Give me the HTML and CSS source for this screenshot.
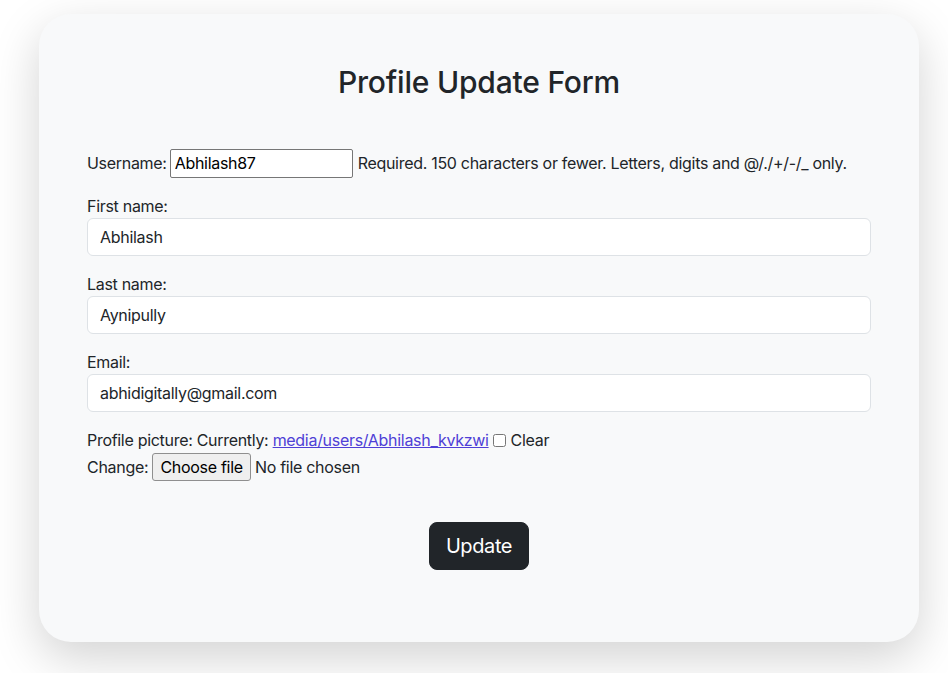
FILE: index.html
```html
<!DOCTYPE html>
<html lang="en">
<head>
<meta charset="utf-8">
<title>Profile Update</title>
<link rel="stylesheet" href="styles.css">
</head>
<body>
<div class="page">
<div class="card">
  <h2 class="title">Profile Update Form</h2>
  <form class="form">
    <p class="row-inline">
      <label for="u">Username:</label>
      <input id="u" class="plain-input" type="text" value="Abhilash87">
      <span class="help">Required. 150 characters or fewer. Letters, digits and @/./+/-/_ only.</span>
    </p>
    <div class="field">
      <label for="f">First name:</label>
      <input id="f" class="control" type="text" value="Abhilash">
    </div>
    <div class="field">
      <label for="l">Last name:</label>
      <input id="l" class="control" type="text" value="Aynipully">
    </div>
    <div class="field">
      <label for="e">Email:</label>
      <input id="e" class="control" type="email" value="abhidigitally@gmail.com">
    </div>
    <div class="pic">
      <div class="pic-line">Profile picture: Currently: <a class="link" href="#">media/users/Abhilash_kvkzwi</a><input type="checkbox" class="check" id="c"><label for="c">Clear</label></div>
      <div class="pic-line">Change: <span class="file-btn">Choose file</span> No file chosen</div>
    </div>
    <div class="actions">
      <button type="button" class="btn">Update</button>
    </div>
  </form>
</div>
</div>
</body>
</html>
```
FILE: styles.css
```css
* { box-sizing: border-box; }
html, body { margin: 0; padding: 0; background: #fff; }
body {
  font-family: Inter, "Noto Sans", "Liberation Sans", sans-serif;
  font-size: 16px;
  line-height: 1.5;
  color: #212529;
  letter-spacing: -0.3px;
}
.page {
  min-height: 673px;
  padding: 14px 0 31px 39px;
}
.card {
  width: 880px;
  height: 628px;
  background: #f8f9fa;
  border-radius: 32px;
  box-shadow: 0 16px 48px rgba(0,0,0,0.175);
  padding: 50px 48px 48px;
}
.title {
  margin: 0;
  text-align: center;
  font-size: 30px;
  font-weight: 500;
  line-height: 1.2;
  letter-spacing: -0.2px;
}
.form { margin-top: 48px; }
.row-inline {
  margin: 0 0 16px;
  height: 30px;
  display: flex;
  align-items: center;
  white-space: nowrap;
}
.plain-input {
  width: 183px;
  height: 29px;
  margin: 0 5px 0 3px;
  border: 1px solid #767676;
  border-radius: 2px;
  padding: 1px 4px;
  font: inherit;
  letter-spacing: inherit;
  color: #000;
  background: #fff;
}
.field { margin-bottom: 16px; }
.field label { display: block; }
.control {
  display: block;
  width: 100%;
  height: 38px;
  padding: 6px 12px;
  font: inherit;
  letter-spacing: inherit;
  color: #212529;
  background: #fff;
  border: 1px solid #dee2e6;
  border-radius: 6px;
}
.pic { margin-top: -1px; }
.pic-line { line-height: 26px; display: flex; align-items: center; white-space: pre; }
.link { color: #4f3fd6; text-decoration: underline; }
.check { margin: 0 5px 0 4px; width: 13px; height: 13px; }
.file-btn {
  display: inline-block;
  height: 28px;
  line-height: 26px;
  padding: 0 7px;
  margin: 0;
  border: 1px solid #8f8f8f;
  border-radius: 3px;
  background: #efefef;
  color: #000;
}
.actions { margin-top: 41px; text-align: center; }
.btn {
  font: inherit;
  font-size: 20px;
  letter-spacing: -0.4px;
  line-height: 30px;
  padding: 8px 16px;
  color: #fff;
  background: #212529;
  border: 1px solid #212529;
  border-radius: 8px;
  cursor: pointer;
}
```
